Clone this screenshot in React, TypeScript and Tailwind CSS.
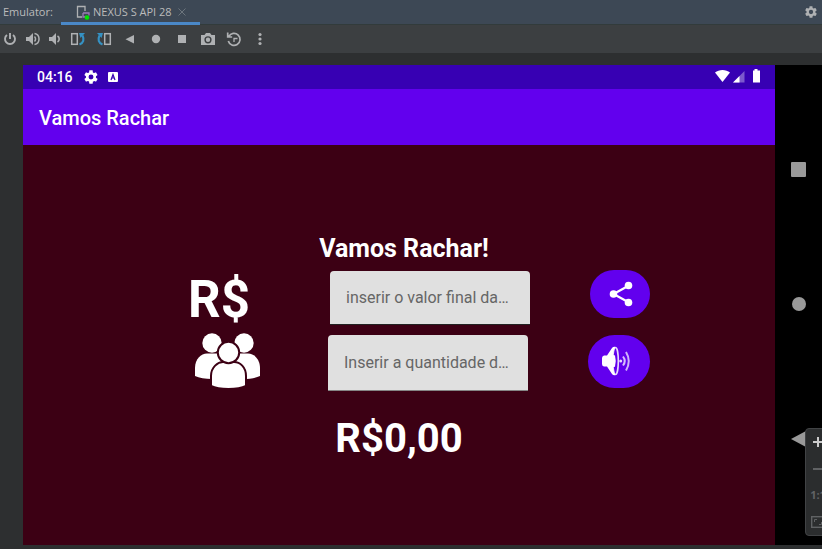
import React from "react";

type IconProps = { className?: string };

function Gear({ className = "" }: IconProps) {
  return (
    <svg viewBox="0 0 24 24" className={className} fill="currentColor" aria-hidden="true">
      <path d="M19.4 13c0-.3.1-.6.1-1s0-.7-.1-1l2.1-1.600c.2-.2.3-.5.1-.7l-2-3.400c-.1-.2-.4-.3-.6-.2l-2.500 1c-.5-.4-1.100-.7-1.700-1L14.500 2.400c0-.2-.2-.4-.5-.4h-4c-.3 0-.5.2-.5.4L9.100 5.100c-.6.2-1.200.6-1.700 1l-2.500-1c-.2-.1-.5 0-.6.2l-2 3.400c-.1.2-.1.5.1.7L4.500 11c0 .3-.1.700-.1 1s0 .7.100 1l-2.100 1.600c-.2.200-.3.500-.1.700l2 3.400c.1.200.4.300.6.200l2.500-1c.5.400 1.100.7 1.700 1l.4 2.700c0 .200.200.4.500.4h4c.3 0 .5-.2.500-.4l.4-2.700c.6-.2 1.200-.6 1.700-1l2.500 1c.2.100.5 0 .6-.2l2-3.400c.1-.2.1-.5-.1-.7zM12 15.700a3.700 3.700 0 1 1 0-7.400 3.700 3.700 0 0 1 0 7.400z" />
    </svg>
  );
}

const tools: { name: string; width: string; art: React.ReactNode }[] = [
  {
    name: "Power",
    width: "w-5",
    art: <path d="M5 4a5 5 0 1 0 6 0M8 2v6" fill="none" stroke="currentColor" strokeWidth="1.900" />,
  },
  {
    name: "Volume Up",
    width: "w-6",
    art: (
      <>
        <path d="M2 6h3l4-4v12l-4-4H2z" fill="currentColor" />
        <path d="M10.500 5.500a3.500 3.500 0 0 1 0 5M10.500 2.500a5.600 5.600 0 0 1 0 11" fill="none" stroke="currentColor" strokeWidth="1.500" />
      </>
    ),
  },
  {
    name: "Volume Down",
    width: "w-5",
    art: (
      <>
        <path d="M3 6h3l4-4v12l-4-4H3z" fill="currentColor" />
        <path d="M11.500 5a3.500 3.500 0 0 1 0 6" fill="none" stroke="currentColor" strokeWidth="1.600" />
      </>
    ),
  },
  {
    name: "Rotate Left",
    width: "w-7",
    art: (
      <>
        <rect x="1.700" y="2.700" width="5.600" height="10.600" fill="none" stroke="currentColor" strokeWidth="1.500" />
        <path d="M9.500 13.500c4-1.500 5-5 3-9" fill="none" stroke="#3592c4" strokeWidth="2.100" />
        <path d="M9 2h6l-4.500 5z" fill="#3592c4" />
      </>
    ),
  },
  {
    name: "Rotate Right",
    width: "w-6",
    art: (
      <>
        <rect x="8.700" y="2.700" width="5.600" height="10.600" fill="none" stroke="currentColor" strokeWidth="1.500" />
        <path d="M6.500 13.500C2.500 12 1.500 8.500 3.500 4.500" fill="none" stroke="#3592c4" strokeWidth="2.100" />
        <path d="M7 2H1l4.500 5z" fill="#3592c4" />
      </>
    ),
  },
  { name: "Back", width: "w-7", art: <path d="M12 4v8.500L3.500 8.200z" fill="currentColor" /> },
  { name: "Home", width: "w-6", art: <circle cx="8" cy="8" r="4.200" fill="currentColor" /> },
  { name: "Overview", width: "w-7", art: <rect x="4" y="4" width="8" height="8" fill="currentColor" /> },
  {
    name: "Take Screenshot",
    width: "w-6",
    art: (
      <path
        fillRule="evenodd"
        d="M1 4h3.500L6 2h4l1.500 2H15v10H1zM8 5.200a3.600 3.600 0 1 0 0 7.200 3.600 3.600 0 0 0 0-7.200zm0 1.400a2.200 2.200 0 1 1 0 4.400 2.200 2.200 0 0 1 0-4.400z"
        fill="currentColor"
      />
    ),
  },
  {
    name: "Snapshots",
    width: "w-7",
    art: (
      <>
        <path d="M2.800 5.500a6 6 0 1 1-.5 4.500M1.700 1.500v4.500h4.500" fill="none" stroke="currentColor" strokeWidth="1.700" />
        <path d="M8 11V7.500h3.500" fill="none" stroke="currentColor" strokeWidth="1.300" />
      </>
    ),
  },
  {
    name: "More",
    width: "w-6",
    art: (
      <g fill="currentColor">
        <circle cx="8" cy="3.500" r="1.600" />
        <circle cx="8" cy="8" r="1.600" />
        <circle cx="8" cy="12.500" r="1.600" />
      </g>
    ),
  },
];

function IdeHeader() {
  return (
    <header className="flex h-[25px] items-stretch border-b border-[#323b3b] bg-[#3d4855] font-['Open_Sans',sans-serif] text-[11px] text-[#bbbbbb]">
      <span className="w-[61px] pl-[3px] leading-6">Emulator:</span>
      <div className="relative flex w-[139px] items-center gap-[2px] pl-[14px]">
        <svg viewBox="0 0 16 16" className="size-4 shrink-0" aria-hidden="true">
          <path d="M7 13H2.500V2.500H10V7" fill="none" stroke="#afb1b3" strokeWidth="1.300" />
          <path d="M8 9h6v2.500M8 9v4h3" fill="none" stroke="#9c7bb5" strokeWidth="1.300" />
          <circle cx="12" cy="13.500" r="2.300" fill="#00e500" />
        </svg>
        <span className="whitespace-nowrap">NEXUS S API 28</span>
        <button type="button" aria-label="Close tab" className="ml-1 text-[#6c757d]">
          <svg viewBox="0 0 8 8" className="size-2" aria-hidden="true">
            <path d="M.5.5l7 7M7.500.5l-7 7" stroke="currentColor" fill="none" />
          </svg>
        </button>
        <span className="absolute inset-x-0 -bottom-px h-[3px] bg-[#4a88c7]" />
      </div>
      <button type="button" aria-label="Settings" className="ml-auto pr-1 text-[#afb1b3]">
        <Gear className="size-[14px]" />
      </button>
    </header>
  );
}

function Toolbar() {
  return (
    <div className="flex h-7 items-center bg-[#3c3f41] text-[#afb1b3]">
      {tools.map((t) => (
        <button key={t.name} type="button" aria-label={t.name} className={`${t.width} flex shrink-0 justify-center`}>
          <svg viewBox="0 0 16 16" className="size-4" aria-hidden="true">
            {t.art}
          </svg>
        </button>
      ))}
    </div>
  );
}

function StatusBar() {
  return (
    <div className="flex h-6 shrink-0 items-center bg-[#3700b3] pr-[14px] pl-[14px] text-sm font-medium text-white">
      <span>04:16</span>
      <Gear className="ml-[10px] size-4" />
      <svg viewBox="0 0 10 10" className="ml-[9px] size-[10px]" aria-hidden="true">
        <rect width="10" height="10" rx="1" fill="white" />
        <path d="M3 8l2-5.500L7 8M3.500 6h3" fill="none" stroke="#3700b3" strokeWidth="1.200" />
      </svg>
      <svg viewBox="0 0 46 14" className="mb-[2px] ml-auto h-[14px] w-[46px]" aria-hidden="true">
        <path d="M0 3.500C4 0 11 0 15 3.500L7.500 13z" fill="white" />
        <path d="M29.500 2v11.500H18z" fill="white" fillOpacity=".35" />
        <path d="M24.500 7v6.500H18z" fill="white" />
        <path d="M38 1.500h1.500V0h3v1.500H45v12h-7z" fill="white" />
      </svg>
    </div>
  );
}

function People() {
  return (
    <svg viewBox="0 0 66 56" className="h-14 w-[66px]" fill="white" aria-hidden="true">
      <circle cx="17" cy="10" r="9.700" />
      <circle cx="49" cy="10" r="9.700" />
      <path d="M0 43V35C0 26 6 20.500 12 20.500h10c6 0 12 6 12 15v7.500c-8 4-26 4-34 0z" />
      <path d="M65 43V35c0-9-6-14.500-12-14.500H43c-6 0-12 6-12 15v7.500c8 4 26 4 34 0z" />
      <g stroke="#3c0014" strokeWidth="2">
        <path d="M16 53V43c0-9 7-14 12-14h11c6 0 12 5 12 14v10c-8 4-27 4-35 0z" />
        <circle cx="33.500" cy="19.500" r="10.700" />
      </g>
    </svg>
  );
}

function Share() {
  return (
    <svg viewBox="0 0 24 26" className="ml-[2px] h-[26px] w-6" aria-hidden="true">
      <path d="M20 4.500L4.500 13 20 21.500" fill="none" stroke="white" strokeWidth="2.200" />
      <g fill="white">
        <circle cx="19.500" cy="4.500" r="3.800" />
        <circle cx="4.500" cy="13" r="3.800" />
        <circle cx="19.500" cy="21.500" r="3.800" />
      </g>
    </svg>
  );
}

function Speaker() {
  return (
    <svg viewBox="0 0 30 30" className="mr-[6px] size-[30px]" fill="none" aria-hidden="true">
      <path d="M1 12q0-2 2-2.500h3L11 2q1-1.500 3-1.300v28.600q-2 .2-3-1.300l-5-7.500H3q-2-.5-2-2.500z" fill="white" />
      <ellipse cx="14.500" cy="15" rx="2.800" ry="13.500" fill="#6200ee" stroke="white" strokeOpacity=".85" strokeWidth="1.600" />
      <path d="M9 9.500q4-1 5 0 1.500 5.500 0 11-1 1-5 0z" fill="white" />
      <circle cx="19.700" cy="15" r="1.500" fill="white" fillOpacity=".85" />
      <path d="M22 10.500q3.500 4.500 0 9" stroke="white" strokeOpacity=".75" strokeWidth="2" />
      <path d="M25 6q5.500 9 0 18.500" stroke="white" strokeOpacity=".7" strokeWidth="2" />
    </svg>
  );
}

function AppScreen() {
  return (
    <main className="flex flex-1 flex-col items-center bg-[#3c0014] pt-[87px] text-white">
      <h2 className="pl-[10px] text-[25px] leading-[34px] font-bold">Vamos Rachar!</h2>
      <div className="mt-[3px] ml-10 flex w-[462px] flex-col gap-2">
        <div className="flex h-[58px] items-center justify-between">
          <label htmlFor="total" className="w-[142px] pt-1 text-[51px] leading-[58px] font-bold">
            R$
          </label>
          <input
            id="total"
            placeholder="inserir o valor final da…"
            className="h-[54px] w-[200px] rounded-t border-b border-[#222222] bg-[#e0e0e0] px-4 text-base text-black outline-none placeholder:text-[#666666]"
          />
          <button type="button" aria-label="Compartilhar" className="mb-2 ml-[60px] flex h-12 w-[60px] items-center justify-center rounded-full bg-[#6200ee]">
            <Share />
          </button>
        </div>
        <div className="flex h-14 items-center justify-between">
          <label htmlFor="people" aria-label="Pessoas" className="mb-1 w-[140px] pl-[7px]">
            <People />
          </label>
          <input
            id="people"
            placeholder="Inserir a quantidade d…"
            className="h-14 w-[200px] rounded-t border-b border-[#858585] bg-[#e0e0e0] px-4 text-base text-black outline-none placeholder:text-[#666666]"
          />
          <button type="button" aria-label="Ouvir" className="mb-1 ml-[60px] flex h-[53px] w-[62px] items-center justify-center rounded-full bg-[#6200ee]">
            <Speaker />
          </button>
        </div>
      </div>
      <output htmlFor="total people" className="mt-6 text-[40px] leading-[47px] font-bold">
        R$0,00
      </output>
    </main>
  );
}

function NavBar() {
  return (
    <nav className="flex w-[47px] shrink-0 flex-col items-center justify-between bg-black pt-24 pb-[98px] text-[#999999]">
      <button type="button" aria-label="Recentes" className="size-4">
        <span className="block size-[15px] rounded-[1px] bg-current" />
      </button>
      <button type="button" aria-label="Início" className="size-[14px]">
        <span className="block size-[14px] rounded-full bg-current" />
      </button>
      <button type="button" aria-label="Voltar">
        <svg viewBox="0 0 16 16" className="size-4" fill="currentColor" aria-hidden="true">
          <path d="M0 8L15 0v16z" />
        </svg>
      </button>
    </nav>
  );
}

function ZoomPanel() {
  return (
    <div className="absolute right-[-9px] bottom-[13px] flex h-[108px] w-[26px] flex-col items-center justify-around rounded border border-[#414345] bg-[#2b2d2e] font-['Open_Sans',sans-serif] text-[#606264]">
      <button type="button" aria-label="Zoom in" className="text-[#cccccc]">
        <svg viewBox="0 0 12 12" className="size-3" aria-hidden="true">
          <path d="M6 1v10M1 6h10" stroke="currentColor" strokeWidth="2" />
        </svg>
      </button>
      <button type="button" aria-label="Zoom out">
        <svg viewBox="0 0 12 12" className="size-3" aria-hidden="true">
          <path d="M1 6h10" stroke="currentColor" strokeWidth="2" />
        </svg>
      </button>
      <button type="button" className="text-[11px] leading-3 font-bold">1:1</button>
      <button type="button" aria-label="Fit to window">
        <svg viewBox="0 0 14 12" className="h-3 w-[14px]" fill="none" stroke="currentColor" aria-hidden="true">
          <rect x=".7" y=".7" width="12.600" height="10.600" strokeWidth="1.400" />
          <path d="M3.500 6V3.500H6M8 8.500h2.500V6" />
        </svg>
      </button>
    </div>
  );
}

export default function App() {
  return (
    <div className="flex h-screen flex-col overflow-hidden bg-[#2d2f30] font-[Roboto,sans-serif]">
      <IdeHeader />
      <Toolbar />
      <div className="relative flex min-h-0 flex-1 overflow-hidden pt-3 pb-1 pl-[23px]">
        <section className="flex min-w-0 flex-1 flex-col">
          <StatusBar />
          <div className="flex h-14 shrink-0 items-center bg-[#6200ee] px-4 pt-[2px]">
            <h1 className="text-xl font-medium text-white">Vamos Rachar</h1>
          </div>
          <AppScreen />
        </section>
        <NavBar />
        <ZoomPanel />
      </div>
    </div>
  );
}
